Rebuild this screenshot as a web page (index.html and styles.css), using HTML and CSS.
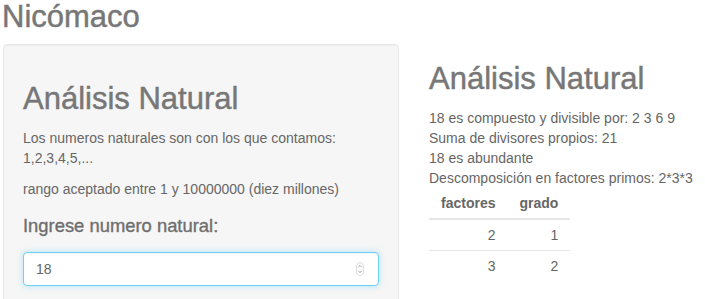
FILE: index.html
```html
<!DOCTYPE html>
<html lang="es">
<head>
<meta charset="utf-8">
<title>Nicómaco</title>
<link rel="stylesheet" href="styles.css">
</head>
<body>
<h1 class="brand">Nicómaco</h1>
<div class="layout">
  <div class="well">
    <h2 class="title">Análisis Natural</h2>
    <p class="intro">Los numeros naturales son con los que contamos:<br>1,2,3,4,5,...</p>
    <p class="range">rango aceptado entre 1 y 10000000 (diez millones)</p>
    <label class="field-label" for="num">Ingrese numero natural:</label>
    <div class="input-wrap">
      <input id="num" class="form-control" type="text" value="18" autofocus>
      <span class="spinner" aria-hidden="true">
        <svg width="8" height="14" viewBox="0 0 8 14">
          <rect x="0.5" y="0.5" width="7" height="13" rx="3.5" fill="#fff" stroke="#dcdcdc"/>
          <path d="M2.3 5.2 L4 3.5 L5.7 5.2" fill="none" stroke="#9a9a9a" stroke-width="0.9"/>
          <path d="M2.3 8.8 L4 10.5 L5.7 8.8" fill="none" stroke="#9a9a9a" stroke-width="0.9"/>
        </svg>
      </span>
    </div>
  </div>
  <div class="result">
    <h2 class="title">Análisis Natural</h2>
    <div class="lines">
      <div>18 es compuesto y divisible por: 2 3 6 9</div>
      <div>Suma de divisores propios: 21</div>
      <div>18 es abundante</div>
      <div>Descomposición en factores primos: 2*3*3</div>
    </div>
    <table class="factors">
      <thead>
        <tr><th>factores</th><th>grado</th></tr>
      </thead>
      <tbody>
        <tr><td>2</td><td>1</td></tr>
        <tr><td>3</td><td>2</td></tr>
      </tbody>
    </table>
  </div>
</div>
</body>
</html>
```
FILE: styles.css
```css
html, body {
  margin: 0;
  padding: 0;
  background: #fff;
}
body {
  font-family: "Liberation Sans", Arial, sans-serif;
  font-size: 14px;
  line-height: 20px;
  color: #666;
}
.brand {
  font-size: 31px;
  line-height: 34px;
  font-weight: normal;
  color: #777;
  margin: 0 0 10px 2px;
  -webkit-text-stroke: 0.45px #777;
}
.layout {
  display: grid;
  grid-template-columns: 396px auto;
  column-gap: 30px;
  padding-left: 3px;
  align-items: start;
}
.well {
  background: #f6f6f6;
  border: 1px solid #e8e8e8;
  border-radius: 4px;
  padding: 19px 19px 30px;
  box-shadow: inset 0 1px 1px rgba(0,0,0,.04);
}
.title {
  font-size: 31px;
  line-height: 34px;
  font-weight: normal;
  color: #777;
  margin: 18px 0 12px;
  -webkit-text-stroke: 0.45px #777;
}
.intro {
  margin: 0 0 11px;
}
.range {
  margin: 0;
}
.field-label {
  display: block;
  font-size: 18.4px;
  line-height: 20px;
  color: #6e6e6e;
  margin: 17px 0 16px;
  -webkit-text-stroke: 0.35px #6e6e6e;
}
.input-wrap {
  position: relative;
}
.form-control {
  display: block;
  box-sizing: border-box;
  width: 100%;
  height: 34px;
  padding: 6px 12px;
  font-family: "Liberation Sans", Arial, sans-serif;
  font-size: 14px;
  color: #666;
  background: #fff;
  border: 1px solid #6fd0f8;
  border-radius: 4px;
  outline: none;
  box-shadow: inset 0 1px 1px rgba(0,0,0,.05), 0 0 6px rgba(111,208,248,.55);
  caret-color: #333;
}
.spinner {
  position: absolute;
  right: 15px;
  top: 10px;
  display: block;
  line-height: 0;
}
.lines {
  margin: 0;
}
.factors {
  border-collapse: collapse;
}
.factors th,
.factors td {
  padding: 5px 12px;
  text-align: right;
}
.factors th {
  font-weight: bold;
  color: #666;
  border-bottom: 2px solid #e6e6e6;
}
.factors tbody tr + tr td {
  border-top: 1px solid #e6e6e6;
}
```
